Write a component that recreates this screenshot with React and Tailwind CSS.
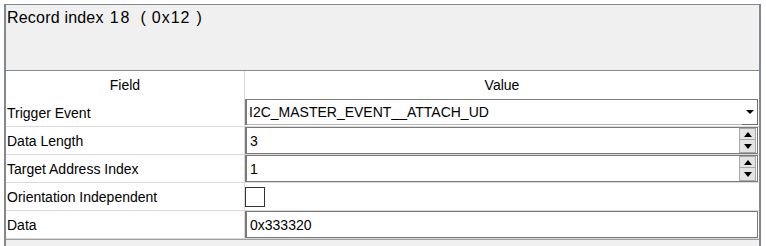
import React from "react"

const rows = [
  { label: "Trigger Event", kind: "combo", value: "I2C_MASTER_EVENT__ATTACH_UD" },
  { label: "Data Length", kind: "spin", value: "3" },
  { label: "Target Address Index", kind: "spin", value: "1" },
  { label: "Orientation Independent", kind: "check" },
  { label: "Data", kind: "text", value: "0x333320" },
]

function UpArrow() {
  return <div className="w-0 h-0 border-x-[4.5px] border-x-transparent border-b-[5px] border-b-black" />
}

function DownArrow() {
  return <div className="w-0 h-0 border-x-[4.5px] border-x-transparent border-t-[5px] border-t-black" />
}

function Editor({ row }) {
  if (row.kind === "combo") {
    return (
      <div className="h-[26px] flex border-t border-l-2 border-[#7a7a7a] bg-white">
        <div className="flex-1 flex items-center pl-[2px] border-b border-[#b4b4b4]">{row.value}</div>
        <div className="w-[16px] h-[25px] flex items-center justify-center border-r border-b border-[#6e6e6e]">
          <div className="w-0 h-0 border-x-[4px] border-x-transparent border-t-[4px] border-t-black" />
        </div>
      </div>
    )
  }
  if (row.kind === "check") {
    return (
      <div className="h-[27px] flex items-center">
        <div className="w-[20px] h-[20px] border border-[#333] bg-white" />
      </div>
    )
  }
  return (
    <div className="h-[27px] flex border border-l-2 border-[#7a7a7a] bg-white">
      <div className="flex-1 flex items-center pl-[3px]">{row.value}</div>
      {row.kind === "spin" && (
        <div className="flex flex-col w-[17px] mr-[1px]">
          <div className="h-[12px] flex items-center justify-center bg-[#e4e4e4] border border-[#a8a8a8]">
            <UpArrow />
          </div>
          <div className="h-[13px] flex items-center justify-center bg-[#e4e4e4] border border-t-0 border-[#a8a8a8]">
            <DownArrow />
          </div>
        </div>
      )}
    </div>
  )
}

export default function App() {
  return (
    <div className="w-[766px] h-[246px] bg-white overflow-hidden font-['Liberation_Sans',Arial,sans-serif] text-black">
      <div className="ml-[4px] mt-[4px] w-[757px] h-[250px] border-t border-l-2 border-r-2 border-[#828790] bg-[#f0f0f0] flex flex-col">
        <div className="h-[65px] pt-[4px] pl-[1px] text-[16px] leading-[18px] flex items-start whitespace-pre">
          <span className="tracking-[0.2px]">Record index</span>
          <span className="ml-[6px] tracking-[2px]">18</span>
          <span className="ml-[9px]">(</span>
          <span className="ml-[6px] tracking-[1px]">0x12</span>
          <span className="ml-[6px]">)</span>
        </div>
        <div className="border-t border-[#828790] bg-white text-[14px] leading-[16px]">
          <div className="h-[28px] flex">
            <div className="w-[239px] flex items-center justify-center border-r border-[#dadada]">Field</div>
            <div className="flex-1 flex items-center justify-center">Value</div>
          </div>
          {rows.map((row, i) => (
            <div key={i} className="h-[28px] flex border-b border-[#dadada]">
              <div className="w-[239px] flex items-center pl-[1px] border-r border-[#dadada]">{row.label}</div>
              <div className="flex-1 pr-[1px]">
                <Editor row={row} />
              </div>
            </div>
          ))}
        </div>
        <div className="border-t border-[#a0a0a0]" />
      </div>
    </div>
  )
}
